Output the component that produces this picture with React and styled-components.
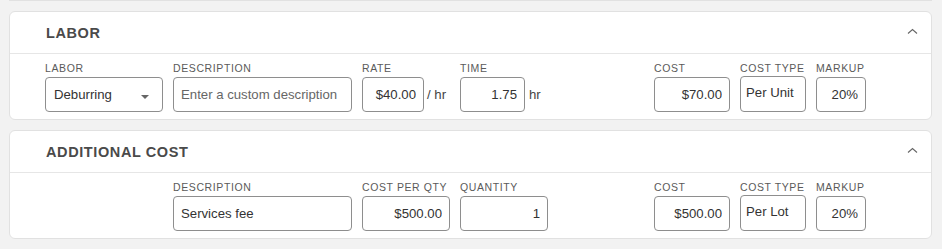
import React from 'react';
import styled, { createGlobalStyle } from 'styled-components';

const GlobalStyle = createGlobalStyle`
  body {
    margin: 0;
    background: #f2f2f2;
    font-family: "Liberation Sans", Arial, sans-serif;
  }
`;

const Page = styled.div`
  display: flex;
  flex-direction: column;
  gap: 10px;
  padding: 0 10px 10px 9px;
`;

// bottom edge of the card above, scrolled almost out of view
const PrevCardEdge = styled.div`
  height: 0;
  background: #fff;
  border-bottom: 1px solid #e1e1e1;
`;

const Card = styled.section`
  background: #fff;
  border: 1px solid #e1e1e1;
  border-radius: 6px;
`;

const CardHeader = styled.header`
  height: 41px;
  display: flex;
  align-items: center;
  justify-content: space-between;
  padding: 0 11px 0 36px;
  border-bottom: 1px solid #e6e6e6;
`;

const Title = styled.h2`
  margin: 0;
  font-size: 14.5px;
  font-weight: 700;
  letter-spacing: 0.6px;
  color: #4a4a4a;
  text-transform: uppercase;
`;

const Toggle = styled.button`
  border: none;
  background: none;
  padding: 0;
  margin: 0 2px 3px 0;
  width: 11px;
  height: 8px;
  display: flex;
  align-items: center;
  justify-content: center;
  cursor: pointer;
`;

const FieldGrid = styled.div`
  display: grid;
  grid-template-columns: 118px 179px 88px 88px 1fr 76px 66px 51px;
  column-gap: 10px;
  padding: 8px 64px 7px 35px;
  align-items: end;
`;

const Field = styled.div`
  display: flex;
  flex-direction: column;
  grid-column: ${p => p.col};
`;

const Label = styled.label`
  font-size: 10.5px;
  line-height: 12px;
  letter-spacing: 0.6px;
  color: #5a5a5a;
  text-transform: uppercase;
  margin-bottom: 3px;
  white-space: nowrap;
`;

const Control = styled.div`
  display: flex;
  align-items: center;
`;

const Input = styled.input`
  box-sizing: border-box;
  width: ${p => p.w}px;
  height: 35px;
  border: 1px solid #8e8e8e;
  border-radius: 4px;
  padding: 0 7px;
  font-family: "Liberation Sans", Arial, sans-serif;
  font-size: 13.2px;
  color: #333;
  text-align: ${p => (p.right ? 'right' : 'left')};
  background: #fff;
  outline: none;

  &::placeholder {
    color: #666;
  }
`;

const SelectBox = styled.div`
  box-sizing: border-box;
  width: ${p => p.w}px;
  height: ${p => (p.arrow ? 35 : 36)}px;
  margin-top: ${p => (p.arrow ? 0 : -1)}px;
  border: 1px solid #8e8e8e;
  border-radius: 4px;
  padding: 0 ${p => (p.arrow ? 13 : 5)}px ${p => (p.arrow ? 0 : 3)}px ${p => (p.arrow ? 8 : 5)}px;
  display: flex;
  align-items: center;
  justify-content: space-between;
  font-size: 13.2px;
  color: #333;
  white-space: nowrap;
`;

const Caret = styled.span`
  width: 0;
  height: 0;
  margin-top: 4px;
  border-left: 4px solid transparent;
  border-right: 4px solid transparent;
  border-top: 4px solid #666;
`;

const Unit = styled.span`
  margin-left: ${p => p.gap}px;
  font-size: 13.2px;
  color: #444;
  white-space: nowrap;
`;

const ChevronUp = () => (
  <svg width="11" height="7" viewBox="0 0 11 7">
    <polyline points="1,5.5 5.5,1.5 10,5.5" fill="none" stroke="#666" strokeWidth="1.1" />
  </svg>
);

const Section = ({ title, children }) => (
  <Card>
    <CardHeader>
      <Title>{title}</Title>
      <Toggle aria-label="Collapse">
        <ChevronUp />
      </Toggle>
    </CardHeader>
    <FieldGrid>{children}</FieldGrid>
  </Card>
);

const CostFields = ({ cost, type, markup }) => (
  <>
    <Field col={6}>
      <Label>Cost</Label>
      <Input w={76} right readOnly value={cost} />
    </Field>
    <Field col={7}>
      <Label>Cost Type</Label>
      <SelectBox w={66}>{type}</SelectBox>
    </Field>
    <Field col={8}>
      <Label>Markup</Label>
      <Input w={50} right readOnly value={markup} />
    </Field>
  </>
);

export default function App() {
  return (
    <>
      <GlobalStyle />
      <Page>
        <PrevCardEdge />
        <Section title="Labor">
          <Field col={1}>
            <Label>Labor</Label>
            <SelectBox w={118} arrow>
              Deburring
              <Caret />
            </SelectBox>
          </Field>
          <Field col={2}>
            <Label>Description</Label>
            <Input w={179} placeholder="Enter a custom description" />
          </Field>
          <Field col={3}>
            <Label>Rate</Label>
            <Control>
              <Input w={62} right readOnly value="$40.00" />
              <Unit gap={3}>/ hr</Unit>
            </Control>
          </Field>
          <Field col={4}>
            <Label>Time</Label>
            <Control>
              <Input w={65} right readOnly value="1.75" />
              <Unit gap={4}>hr</Unit>
            </Control>
          </Field>
          <CostFields cost="$70.00" type="Per Unit" markup="20%" />
        </Section>
        <Section title="Additional Cost">
          <Field col={2}>
            <Label>Description</Label>
            <Input w={179} readOnly value="Services fee" />
          </Field>
          <Field col={3}>
            <Label>Cost Per Qty</Label>
            <Input w={88} right readOnly value="$500.00" />
          </Field>
          <Field col={4}>
            <Label>Quantity</Label>
            <Input w={88} right readOnly value="1" />
          </Field>
          <CostFields cost="$500.00" type="Per Lot" markup="20%" />
        </Section>
      </Page>
    </>
  );
}
